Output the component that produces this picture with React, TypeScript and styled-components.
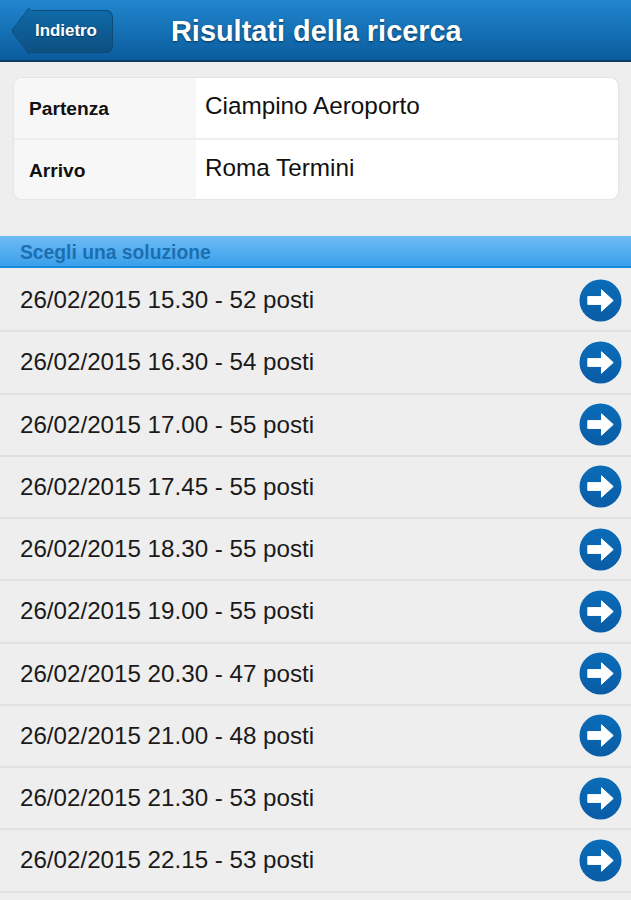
import React from "react";
import styled, { createGlobalStyle } from "styled-components";

const GlobalStyle = createGlobalStyle`
  html, body {
    margin: 0;
    padding: 0;
    background-color: #eeeeee;
    font-family: "Liberation Sans", Arial, sans-serif;
  }
`;

const Page = styled.div`
  width: 631px;
  height: 900px;
  overflow: hidden;
  background-color: #eeeeee;
`;

const Header = styled.header`
  box-sizing: border-box;
  height: 62px;
  display: flex;
  align-items: center;
  padding: 2px 0 0 27px;
  background: linear-gradient(#2186cf, #0a5c9c);
  border-bottom: 2px solid #0b3c63;
`;

const BackButton = styled.button`
  position: relative;
  box-sizing: border-box;
  width: 86px;
  height: 43px;
  padding: 0 0 1px 8px;
  border: 1px solid #0c4a78;
  border-left: none;
  border-radius: 0 7px 7px 0;
  background: linear-gradient(#0f6aa8, #0d4f80);
  color: #ffffff;
  font-family: inherit;
  font-size: 16.9px;
  font-weight: bold;
  text-align: left;
  text-shadow: 0 1px 1px #0a3556;

  &::before {
    content: "";
    position: absolute;
    left: -13px;
    top: 5.5px;
    width: 30px;
    height: 30px;
    box-sizing: border-box;
    border-left: 1px solid #0c4a78;
    border-bottom: 1px solid #0c4a78;
    border-radius: 0 0 0 4px;
    background: linear-gradient(-45deg, #0d4f80, #0f6aa8);
    transform: rotate(45deg) skew(8deg, 8deg);
    z-index: 0;
  }
`;

const BackLabel = styled.span`
  position: relative;
  z-index: 1;
`;

const Title = styled.h1`
  margin: 0 0 0 58px;
  color: #ffffff;
  font-size: 28.9px;
  font-weight: bold;
  white-space: nowrap;
  text-shadow: 0 1px 2px #0a3556;
`;

const RouteCard = styled.div`
  margin: 16px 13px 0 14px;
  border-radius: 8px;
  overflow: hidden;
  background-color: #ffffff;
  box-shadow: 0 0 2px #cfcfcf;
`;

const RouteRow = styled.div`
  box-sizing: border-box;
  display: flex;
  height: 60px;

  & + & {
    border-top: 2px solid #eeeeee;
    height: 61px;
  }
`;

const RouteLabel = styled.div`
  box-sizing: border-box;
  width: 182px;
  padding: 2px 0 0 15px;
  display: flex;
  align-items: center;
  background-color: #f7f7f7;
  color: #111111;
  font-size: 19.2px;
  font-weight: bold;
`;

const RouteValue = styled.div`
  padding: 0 0 4px 9px;
  display: flex;
  align-items: center;
  color: #111111;
  font-size: 24.3px;
`;

const SectionTitle = styled.div`
  box-sizing: border-box;
  height: 32px;
  margin: 37px 0 2px;
  padding: 3px 0 0 20px;
  display: flex;
  align-items: center;
  background: linear-gradient(#6fbcf3, #39a0ec);
  border-bottom: 2px solid #1a8ae0;
  color: #1c6fb0;
  font-size: 19.3px;
  font-weight: bold;
`;

const ResultRow = styled.div`
  box-sizing: border-box;
  height: 62.25px;
  padding: 0 9px 0 20px;
  display: flex;
  align-items: center;
  justify-content: space-between;
  border-bottom: 2px solid #e1e1e1;
  color: #1a1a1a;
  font-size: 24.16px;
`;

const ArrowIcon = () => (
  <svg width="43" height="43" viewBox="0 0 44 44">
    <defs>
      <linearGradient id="arrowDisc" x1="0" y1="0" x2="0" y2="1">
        <stop offset="0" stopColor="#0a6cb8" />
        <stop offset="1" stopColor="#0a5ca6" />
      </linearGradient>
    </defs>
    <circle cx="22" cy="22" r="21.5" fill="url(#arrowDisc)" />
    <path d="M9 18h14v-7L35 22 23 33V26H9z" fill="#ffffff" stroke="#ffffff" strokeWidth="1" strokeLinejoin="round" />
  </svg>
);

const results = [
  "26/02/2015 15.30 - 52 posti",
  "26/02/2015 16.30 - 54 posti",
  "26/02/2015 17.00 - 55 posti",
  "26/02/2015 17.45 - 55 posti",
  "26/02/2015 18.30 - 55 posti",
  "26/02/2015 19.00 - 55 posti",
  "26/02/2015 20.30 - 47 posti",
  "26/02/2015 21.00 - 48 posti",
  "26/02/2015 21.30 - 53 posti",
  "26/02/2015 22.15 - 53 posti",
];

export default function App() {
  return (
    <Page>
      <GlobalStyle />
      <Header>
        <BackButton>
          <BackLabel>Indietro</BackLabel>
        </BackButton>
        <Title>Risultati della ricerca</Title>
      </Header>
      <RouteCard>
        <RouteRow>
          <RouteLabel>Partenza</RouteLabel>
          <RouteValue>Ciampino Aeroporto</RouteValue>
        </RouteRow>
        <RouteRow>
          <RouteLabel>Arrivo</RouteLabel>
          <RouteValue>Roma Termini</RouteValue>
        </RouteRow>
      </RouteCard>
      <SectionTitle>Scegli una soluzione</SectionTitle>
      {results.map((text) => (
        <ResultRow key={text}>
          {text}
          <ArrowIcon />
        </ResultRow>
      ))}
    </Page>
  );
}
